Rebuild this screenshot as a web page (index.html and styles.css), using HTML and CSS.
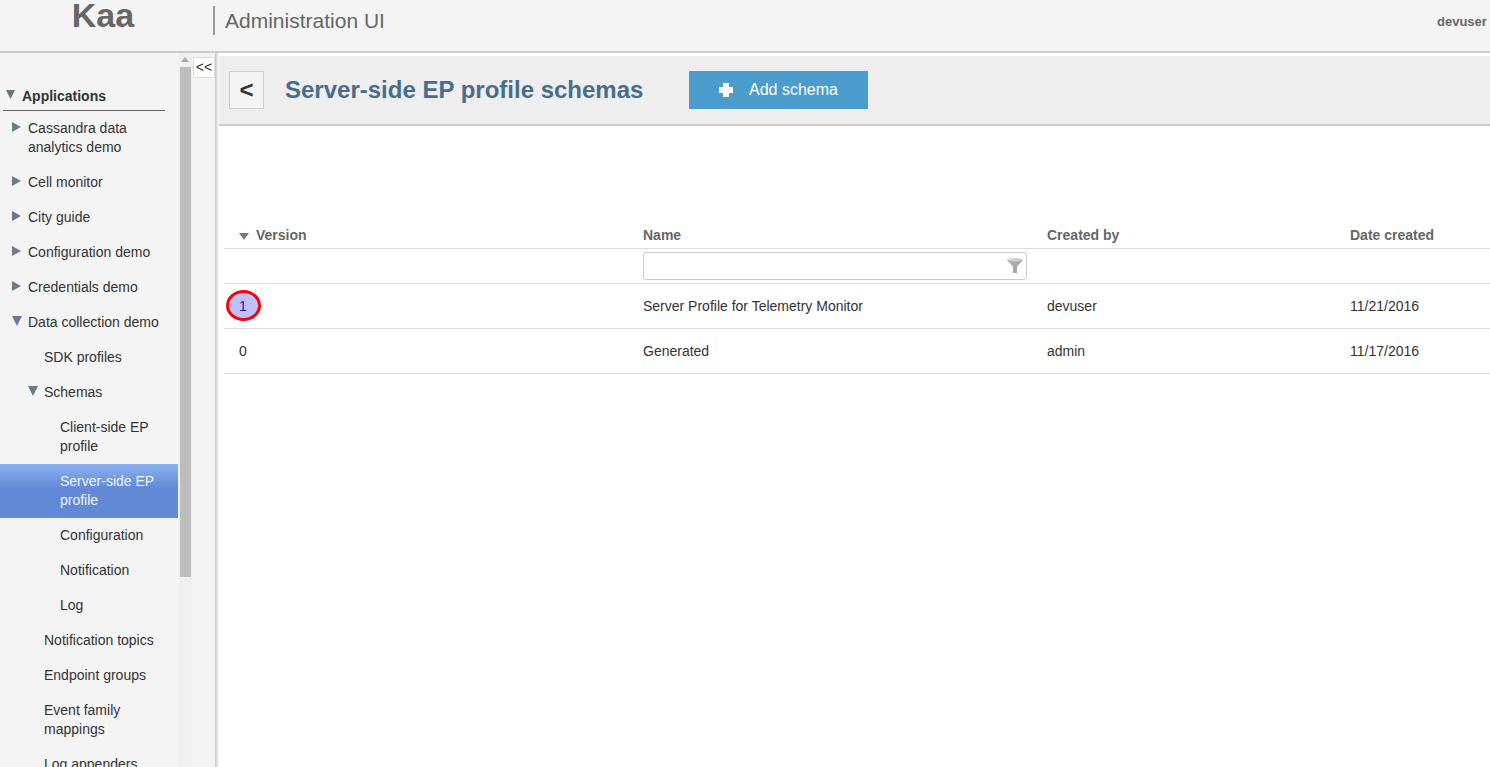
FILE: index.html
```html
<!doctype html>
<html>
<head>
  <title>Kaa Administration UI</title>
  <link rel="stylesheet" href="styles.css">
</head>
<body>
  <header class="topbar">
    <div class="logo">Kaa</div>
    <div class="app-title">Administration UI</div>
    <div class="user">devuser</div>
  </header>
  <div class="layout">
    <aside class="sidebar">
      <nav class="nav">
        <div class="nav-heading">
          <svg class="arrow-head" width="9" height="9" viewBox="0 0 10 10" preserveAspectRatio="none"><path d="M0 0H10L5 10Z"/></svg>
          <span>Applications</span>
        </div>
        <a class="item lvl1"><svg class="arrow" width="10" height="10" viewBox="0 0 10 10"><path d="M0 0L9 5L0 10Z"/></svg><span>Cassandra data analytics demo</span></a>
        <a class="item lvl1"><svg class="arrow" width="10" height="10" viewBox="0 0 10 10"><path d="M0 0L9 5L0 10Z"/></svg><span>Cell monitor</span></a>
        <a class="item lvl1"><svg class="arrow" width="10" height="10" viewBox="0 0 10 10"><path d="M0 0L9 5L0 10Z"/></svg><span>City guide</span></a>
        <a class="item lvl1"><svg class="arrow" width="10" height="10" viewBox="0 0 10 10"><path d="M0 0L9 5L0 10Z"/></svg><span>Configuration demo</span></a>
        <a class="item lvl1"><svg class="arrow" width="10" height="10" viewBox="0 0 10 10"><path d="M0 0L9 5L0 10Z"/></svg><span>Credentials demo</span></a>
        <a class="item lvl1"><svg class="arrow" width="10" height="10" viewBox="0 0 10 10"><path d="M0 0H10L5 10Z"/></svg><span>Data collection demo</span></a>
        <a class="item lvl2"><span>SDK profiles</span></a>
        <a class="item lvl2 has-arrow"><svg class="arrow" width="10" height="10" viewBox="0 0 10 10"><path d="M0 0H10L5 10Z"/></svg><span>Schemas</span></a>
        <a class="item lvl3"><span>Client-side EP profile</span></a>
        <a class="item lvl3 selected"><span>Server-side EP profile</span></a>
        <a class="item lvl3"><span>Configuration</span></a>
        <a class="item lvl3"><span>Notification</span></a>
        <a class="item lvl3"><span>Log</span></a>
        <a class="item lvl2"><span>Notification topics</span></a>
        <a class="item lvl2"><span>Endpoint groups</span></a>
        <a class="item lvl2"><span>Event family mappings</span></a>
        <a class="item lvl2"><span>Log appenders</span></a>
      </nav>
      <div class="scrollbar">
        <svg class="scroll-up" width="8" height="5" viewBox="0 0 8 5"><path d="M0 5L4 0L8 5Z"/></svg>
        <div class="scroll-thumb"></div>
      </div>
    </aside>
    <div class="splitter">
      <button class="collapse">&lt;&lt;</button>
    </div>
    <main class="main">
      <div class="toolbar">
        <button class="back">&lt;</button>
        <h1 class="page-title">Server-side EP profile schemas</h1>
        <button class="add">
          <svg width="14" height="14" viewBox="0 0 14 14"><path d="M4 0H10V4H14V10H10V14H4V10H0V4H4Z"/></svg>
          <span>Add schema</span>
        </button>
      </div>
      <table class="grid">
        <colgroup>
          <col class="col-version">
          <col class="col-name">
          <col class="col-by">
          <col class="col-date">
        </colgroup>
        <thead>
          <tr class="head">
            <th><svg class="sort" width="10" height="7" viewBox="0 0 10 7"><path d="M0 0H10L5 7Z"/></svg>Version</th>
            <th>Name</th>
            <th>Created by</th>
            <th>Date created</th>
          </tr>
          <tr class="filters">
            <th></th>
            <th>
              <div class="filter">
                <svg width="16" height="15" viewBox="0 0 16 15"><ellipse cx="8" cy="2" rx="8" ry="2" fill="#d0d0d0"/><path d="M0 2Q8 5 16 2L10 8.500V15H6V8.500Z"/></svg>
              </div>
            </th>
            <th></th>
            <th></th>
          </tr>
        </thead>
        <tbody>
          <tr>
            <td><span class="marked">1</span></td>
            <td>Server Profile for Telemetry Monitor</td>
            <td>devuser</td>
            <td>11/21/2016</td>
          </tr>
          <tr>
            <td>0</td>
            <td>Generated</td>
            <td>admin</td>
            <td>11/17/2016</td>
          </tr>
        </tbody>
      </table>
    </main>
  </div>
</body>
</html>
```

FILE: styles.css
```css
html, body {
  height: 100%;
  margin: 0;
  overflow: hidden;
}
body {
  display: flex;
  flex-direction: column;
  background: #fff;
  color: #333;
  font-family: "Liberation Sans", Arial, sans-serif;
  font-size: 14px;
}

/* top bar */
.topbar {
  flex: none;
  display: flex;
  height: 51px;
  background: #f4f4f4;
  border-bottom: 2px solid #ccc;
  color: #666;
}
.logo {
  width: 206px;
  height: 32px;
  line-height: 30px;
  text-align: center;
  font-size: 34px;
  font-weight: bold;
}
.app-title {
  align-self: flex-start;
  height: 29px;
  line-height: 30px;
  margin: 6px 0 0 7px;
  padding-left: 10px;
  border-left: 2px solid #999;
  font-size: 21px;
}
.user {
  margin-left: auto;
  width: 50px;
  margin-right: 3px;
  padding-top: 14px;
  font-size: 13px;
  font-weight: bold;
  overflow: hidden;
}

.layout {
  flex: 1;
  display: flex;
  min-height: 0;
}

/* sidebar */
.sidebar {
  flex: none;
  display: flex;
  width: 192px;
  background: #f4f4f4;
}
.nav {
  width: 178px;
  flex: none;
  padding-top: 34px;
}
.nav-heading {
  display: flex;
  align-items: flex-start;
  width: 162px;
  height: 24px;
  margin-left: 3px;
  box-sizing: border-box;
  padding-left: 3px;
  border-bottom: 1px solid #666;
  line-height: 19px;
  font-weight: bold;
}
.arrow-head {
  margin: 3px 7px 0 0;
  fill: #6b7280;
}
.item {
  display: flex;
  align-items: flex-start;
  padding: 8px 15px 8px 0;
  line-height: 19px;
  color: #333;
}
.lvl1 { padding-left: 12px; }
.lvl2 { padding-left: 44px; }
.lvl2.has-arrow { padding-left: 28px; }
.lvl3 { padding-left: 60px; }
.arrow {
  flex: none;
  margin: 3px 6px 0 0;
  fill: #6b7a8f;
}
.selected {
  background: linear-gradient(#8db2f2, #6189d6 45%, #6189d6);
  color: #eef3ff;
}

.scrollbar {
  flex: 1;
  position: relative;
  padding: 14px 1px 0 2px;
  background: #f0f0f0;
}
.scroll-up {
  position: absolute;
  top: 4px;
  left: 3px;
  fill: #aaa;
}
.scroll-thumb {
  height: 510px;
  background: #bdbdbd;
}

.splitter {
  flex: none;
  width: 23px;
  background: #f4f4f4;
  padding: 4px 0 0 1px;
  box-sizing: border-box;
}
.collapse {
  display: block;
  width: 22px;
  height: 21px;
  padding: 0 0 2px;
  background: #fff;
  border: 1px solid #ddd;
  color: #333;
  font-family: "Liberation Sans", Arial, sans-serif;
  font-size: 14px;
}

/* main column */
.main {
  flex: 1;
  min-width: 0;
  padding-left: 4px;
  background: linear-gradient(to right, #c4c4c4, #fff) no-repeat 0 0 / 4px 100%;
}
.toolbar {
  display: flex;
  align-items: center;
  height: 68px;
  margin-top: 3px;
  padding-left: 10px;
  background: #eee;
  border-bottom: 2px solid #ccc;
}
.back {
  width: 35px;
  height: 38px;
  padding: 0;
  background: #f4f4f4;
  border: 1px solid #ccc;
  color: #333;
  font-family: "Liberation Sans", Arial, sans-serif;
  font-size: 24px;
  font-weight: bold;
}
.page-title {
  margin: 0 0 0 21px;
  width: 404px;
  color: #486d8c;
  font-size: 24px;
  font-weight: bold;
}
.add {
  display: flex;
  align-items: center;
  width: 179px;
  height: 38px;
  padding: 0 0 0 30px;
  background: #4b9bcd;
  border: 0;
  color: #fff;
  font-family: "Liberation Sans", Arial, sans-serif;
  font-size: 16px;
}
.add svg {
  margin-right: 16px;
  fill: #fff;
}

/* table */
.grid {
  width: 1266px;
  margin: 96px 0 0 5px;
  border-collapse: collapse;
  table-layout: fixed;
}
.col-version, .col-name { width: 404px; }
.col-by { width: 303px; }
.grid th, .grid td {
  padding: 0 15px;
  text-align: left;
  border-bottom: 1px solid #ddd;
}
.grid th {
  color: #666;
  font-weight: bold;
}
.head th {
  height: 26px;
}
.filters th {
  height: 34px;
}
.grid td {
  height: 44px;
}
.sort {
  margin-right: 7px;
  fill: #6b7a8f;
}
.filter {
  display: flex;
  align-items: center;
  justify-content: flex-end;
  height: 26px;
  margin: -1px -10px 0 0;
  padding-right: 3px;
  background: #fff;
  border: 1px solid #ccc;
  border-radius: 3px;
}
.filter svg {
  fill: #a8a8a8;
}
.marked {
  position: relative;
  color: #1a1a9c;
}
.marked::before {
  content: "";
  position: absolute;
  z-index: -1;
  left: -13px;
  top: -8px;
  width: 29px;
  height: 25px;
  background: #c0c0ff;
  border: 3px solid #f00;
  border-radius: 50%;
}
```
